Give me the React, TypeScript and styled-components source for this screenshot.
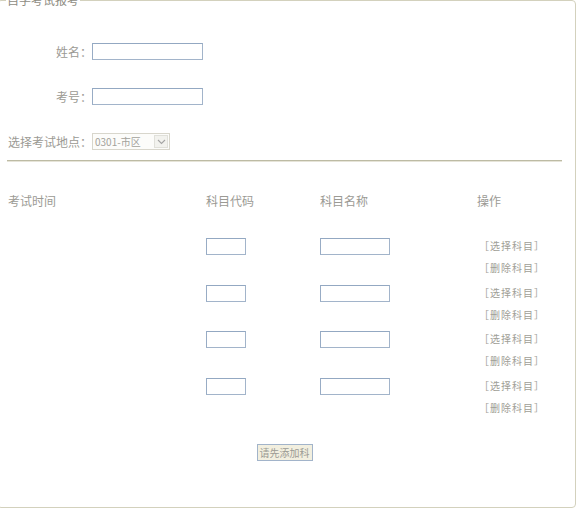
import styled, { createGlobalStyle } from "styled-components";

const GlobalStyle = createGlobalStyle`
  body {
    margin: 0;
    background: #fff;
    font-family: "Noto Sans CJK SC", "Noto Sans", sans-serif;
    font-size: 12px;
    color: #9b9a94;
    overflow: hidden;
  }
`;

const subjects = [1, 2, 3, 4];

function App() {
  return (
    <>
      <GlobalStyle />
      <Panel>
        <Legend>自学考试报考</Legend>
        <InfoForm>
          <Label>姓名：</Label>
          <TextInput $width={111} />
          <Label>考号：</Label>
          <TextInput $width={111} />
          <Label>选择考试地点：</Label>
          <SelectBox>
            <SelectValue>0301-市区</SelectValue>
            <SelectArrow>
              <svg width="9" height="6" viewBox="0 0 9 6">
                <path d="M1 1l3.5 3.5L8 1" fill="none" stroke="#a4a4a4" strokeWidth="1.1" />
              </svg>
            </SelectArrow>
          </SelectBox>
        </InfoForm>
        <Divider />
        <HeaderRow>
          <span>考试时间</span>
          <span>科目代码</span>
          <span>科目名称</span>
          <span>操作</span>
        </HeaderRow>
        <SubjectList>
          {subjects.map((n) => (
            <SubjectRow key={n}>
              <span />
              <Cell>
                <TextInput $width={40} />
              </Cell>
              <Cell>
                <TextInput $width={70} />
              </Cell>
              <Actions>
                <ActionLink>［选择科目］</ActionLink>
                <ActionLink>［删除科目］</ActionLink>
              </Actions>
            </SubjectRow>
          ))}
        </SubjectList>
        <ButtonBar>
          <AddButton type="button">请先添加科</AddButton>
        </ButtonBar>
      </Panel>
    </>
  );
}

const Panel = styled.fieldset`
  box-sizing: border-box;
  width: 579px;
  height: 516px;
  margin: -8px 0 0 -3px;
  padding: 0 12px 0 8px;
  border: 1px solid #d3d1bd;
  border-radius: 4px;
`;

const Legend = styled.legend`
  padding: 0 1px;
  font-size: 12px;
  line-height: 16px;
  color: #8f8d84;
`;

const InfoForm = styled.div`
  display: grid;
  grid-template-columns: 84px auto;
  justify-content: start;
  align-items: center;
  row-gap: 28px;
  padding: 35px 0 0 2px;
`;

const Label = styled.span`
  text-align: right;
  white-space: nowrap;
  line-height: 17px;
  font-size: 12px;
`;

const TextInput = styled.input<{ $width: number }>`
  box-sizing: border-box;
  display: block;
  width: ${(p) => p.$width}px;
  height: 17px;
  margin: 0;
  padding: 0 2px;
  border: 1px solid #a2b4ca;
  border-top-color: #93a8c2;
  border-left-color: #98acc5;
  background: #fff;
  outline: none;
`;

const SelectBox = styled.div`
  position: relative;
  box-sizing: border-box;
  width: 78px;
  height: 17px;
  border: 1px solid #d8d6cc;
  background: #fcfcfa;
`;

const SelectValue = styled.span`
  display: block;
  padding-left: 2px;
  font-size: 10px;
  line-height: 15px;
  color: #a3a29c;
`;

const SelectArrow = styled.span`
  position: absolute;
  top: 1px;
  right: 1px;
  display: flex;
  align-items: center;
  justify-content: center;
  box-sizing: border-box;
  width: 14px;
  height: 13px;
  border: 1px solid #e0e0da;
  background: #f2f2ee;
`;

const Divider = styled.hr`
  height: 0;
  margin: 10px 1px 0;
  border: 0;
  border-top: 1px solid #bdbba4;
  border-bottom: 1px solid #e6e4d8;
`;

const HeaderRow = styled.div`
  display: grid;
  grid-template-columns: 198px 114px 157px 1fr;
  margin-top: 31px;
  padding-left: 2px;
  line-height: 16px;
  font-size: 12px;
`;

const SubjectList = styled.div`
  display: grid;
  grid-auto-rows: 46.67px;
  margin-top: 26px;
`;

const SubjectRow = styled.div`
  display: grid;
  grid-template-columns: 198px 114px 157px 1fr;
  align-items: start;
  padding-left: 2px;
`;

const Cell = styled.div`
  padding-top: 3px;
`;

const Actions = styled.div`
  display: flex;
  flex-direction: column;
`;

const ActionLink = styled.a`
  display: block;
  margin-left: 2px;
  font-size: 10px;
  letter-spacing: 1px;
  line-height: 22px;
  color: #a09e96;
  text-decoration: none;
  cursor: pointer;
`;

const ButtonBar = styled.div`
  display: flex;
  justify-content: center;
  margin-top: 22px;
`;

const AddButton = styled.button`
  box-sizing: border-box;
  height: 17px;
  margin: 0;
  padding: 0 2px;
  border: 1px solid #a2b4ca;
  background: #f2efdf;
  font-family: "Noto Sans CJK SC", sans-serif;
  font-size: 10px;
  line-height: 15px;
  color: #9b9a94;
`;

export default App;
